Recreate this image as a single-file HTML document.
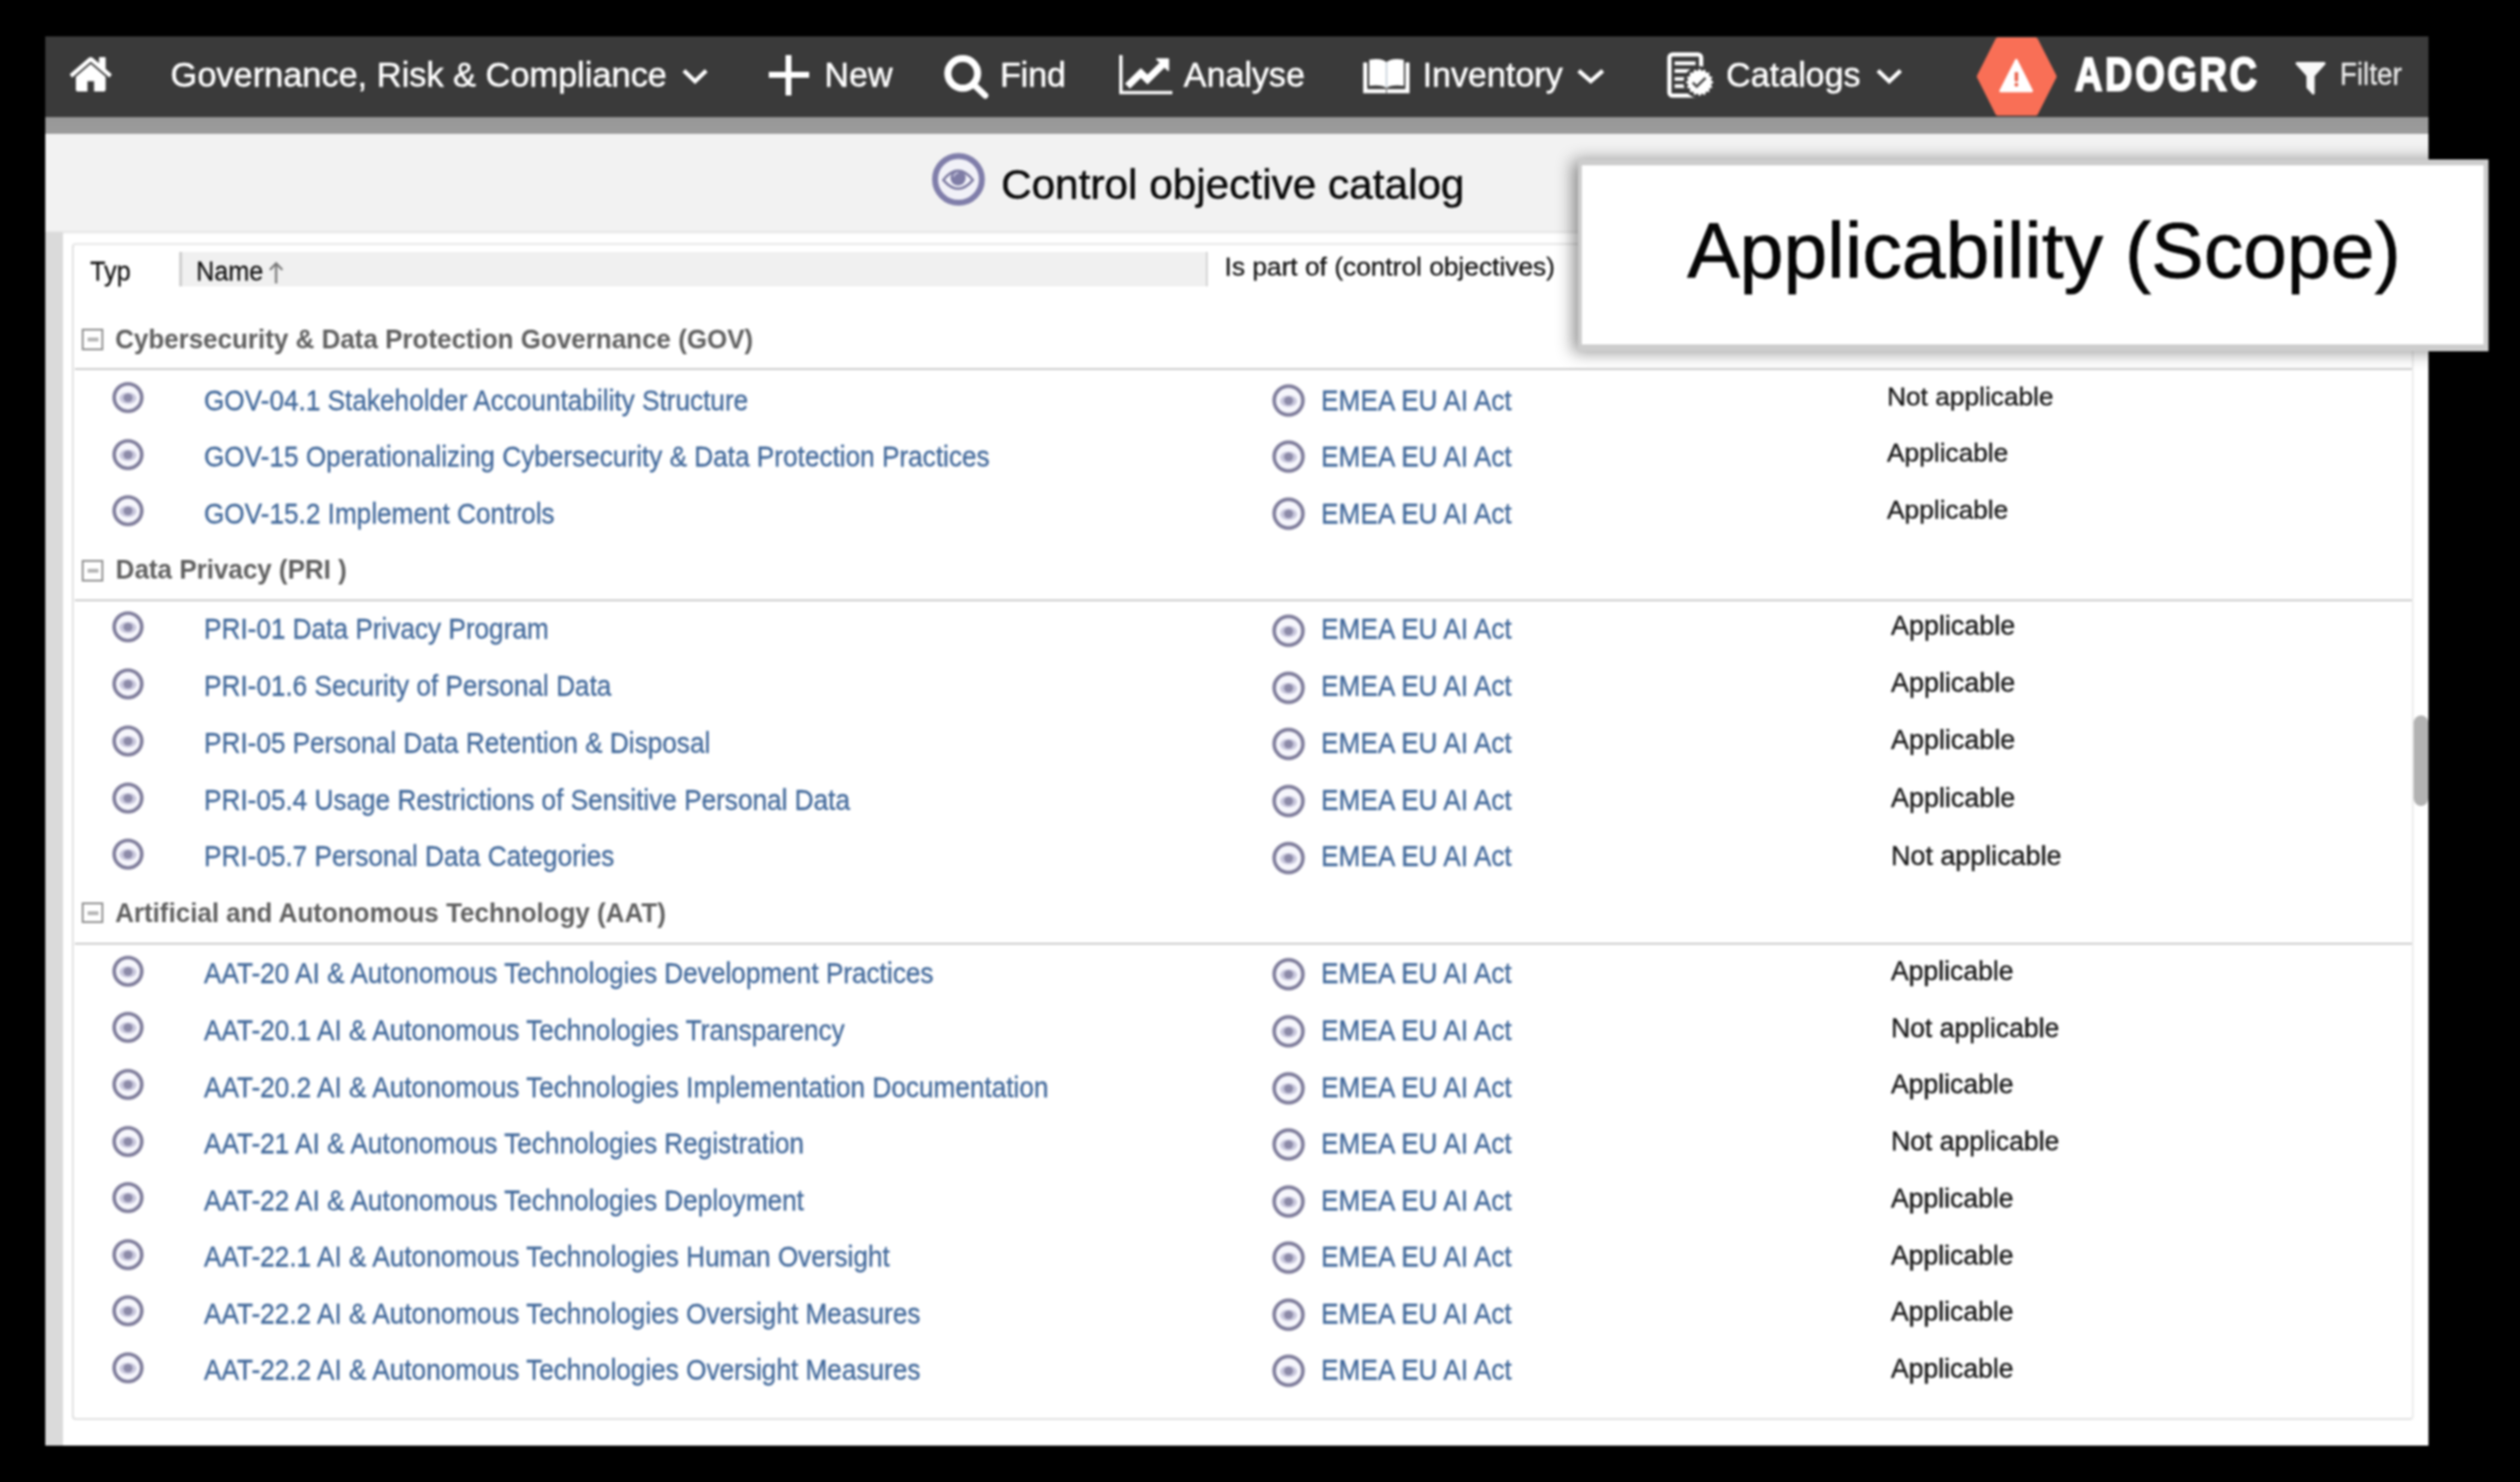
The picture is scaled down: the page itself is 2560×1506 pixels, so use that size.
<!DOCTYPE html>
<html><head><meta charset="utf-8"><title>Control objective catalog</title>
<style>
html,body{margin:0;padding:0;background:#000;}
body{width:2560px;height:1506px;position:relative;overflow:hidden;font-family:"Liberation Sans",sans-serif;}
.a{position:absolute;}
.t{position:absolute;line-height:1;white-space:pre;}
</style></head><body><div id="w" style="position:absolute;left:0;top:0;width:2560px;height:1506px;background:#000;filter:blur(0.85px);">

<div class="a" style="left:46px;top:36.5px;width:2421.1px;height:1432.5px;background:#fff;"></div>
<div class="a" style="left:46px;top:36.5px;width:2421.1px;height:82.2px;background:#3a3a3a;"></div>
<div class="a" style="left:46px;top:118.5px;width:2421.1px;height:17.6px;background:linear-gradient(#979797,#9c9c9c);"></div>
<div class="a" style="left:46px;top:136px;width:2421.1px;height:98.5px;background:#f2f2f2;"></div>
<div class="a" style="left:46px;top:233.5px;width:2421.1px;height:4px;background:linear-gradient(#f0f0f0,#e6e6e6,#fff);"></div>
<div class="a" style="left:46px;top:236.3px;width:17.5px;height:1232.7px;background:#dadada;"></div>
<div class="a" style="left:73.1px;top:247.1px;width:2375.2px;height:1192.4px;border:2.2px solid #e2e2e2;border-right-color:#ececec;border-top-color:#e8e8e8;border-radius:4px;box-sizing:content-box;"></div>
<div class="a" style="left:184.5px;top:255.7px;width:1041px;height:35px;background:#f0f0f0;"></div>
<div class="a" style="left:182.4px;top:255.7px;width:2.2px;height:35px;background:#cfcfcf;"></div>
<div class="a" style="left:1224.6px;top:255.7px;width:2.2px;height:35px;background:#d4d4d4;"></div>
<div class="t " style="left:91.5px;top:264.2px;font-size:25.5px;color:#111;font-weight:400;-webkit-text-stroke:0.3px #111;transform-origin:0 21.59px;transform:scaleY(1.05);">Typ</div>
<div class="t " style="left:199.3px;top:264.2px;font-size:25.5px;color:#111;font-weight:400;-webkit-text-stroke:0.3px #111;transform-origin:0 21.59px;transform:scaleY(1.05);">Name</div>
<svg class="a" style="left:271px;top:264px" width="20" height="26" viewBox="0 0 20 26"><path d="M9.5 24V4M3.2 10.2L9.5 3.6L15.8 10.2" fill="none" stroke="#777" stroke-width="2.2"/></svg>
<div class="t " style="left:1244.0px;top:258.5px;font-size:25.9px;color:#111;font-weight:400;transform-origin:0 0;transform:scaleX(1.032);-webkit-text-stroke:0.3px #111;">Is part of (control objectives)</div>
<div class="a" style="left:83.4px;top:334.0px;width:18px;height:17.6px;border:2.2px solid #939393;background:#fff;"></div>
<div class="a" style="left:89px;top:343.4px;width:11.4px;height:3.3px;background:#b6b6b6;"></div>
<div class="t " style="left:116.9px;top:332.0px;font-size:26.4px;color:#5f5f5f;font-weight:700;transform-origin:0 22.35px;transform:scaleY(1.075);">Cybersecurity &amp; Data Protection Governance (GOV)</div>
<div class="a" style="left:76px;top:374.4px;width:2374px;height:2px;background:#cdcdcd;"></div>
<svg class="a" style="left:112.4px;top:385.9px" width="36" height="36" viewBox="-18 -18 36 36"><circle r="14.0" fill="#f6f6fc" stroke="#7f7d9b" stroke-width="3.7"/><ellipse cx="0" cy="0.6" rx="8.6" ry="5.8" fill="#c9c8dd"/><ellipse cx="0" cy="0.2" rx="4.6" ry="4.2" fill="#8d8ba9"/></svg>
<div class="t " style="left:207.2px;top:394.8px;font-size:26.6px;color:#41689a;font-weight:400;-webkit-text-stroke:0.3px #41689a;transform-origin:0 22.52px;transform:scaleY(1.075);">GOV-04.1 Stakeholder Accountability Structure</div>
<svg class="a" style="left:1290.5px;top:388.5px" width="36" height="36" viewBox="-18 -18 36 36"><circle r="14.6" fill="#f6f6fc" stroke="#7f7d9b" stroke-width="3.7"/><ellipse cx="0" cy="0.6" rx="8.6" ry="5.8" fill="#c9c8dd"/><ellipse cx="0" cy="0.2" rx="4.6" ry="4.2" fill="#8d8ba9"/></svg>
<div class="t " style="left:1342.1px;top:394.8px;font-size:26.6px;color:#41689a;font-weight:400;-webkit-text-stroke:0.3px #41689a;transform-origin:0 22.52px;transform:scaleY(1.075);">EMEA EU AI Act</div>
<div class="t " style="left:1917.0px;top:389.6px;font-size:26.7px;color:#181818;font-weight:400;-webkit-text-stroke:0.4px #181818;">Not applicable</div>
<svg class="a" style="left:112.4px;top:443.6px" width="36" height="36" viewBox="-18 -18 36 36"><circle r="14.0" fill="#f6f6fc" stroke="#7f7d9b" stroke-width="3.7"/><ellipse cx="0" cy="0.6" rx="8.6" ry="5.8" fill="#c9c8dd"/><ellipse cx="0" cy="0.2" rx="4.6" ry="4.2" fill="#8d8ba9"/></svg>
<div class="t " style="left:207.2px;top:452.0px;font-size:26.6px;color:#41689a;font-weight:400;-webkit-text-stroke:0.3px #41689a;transform-origin:0 22.52px;transform:scaleY(1.075);">GOV-15 Operationalizing Cybersecurity &amp; Data Protection Practices</div>
<svg class="a" style="left:1290.5px;top:446.2px" width="36" height="36" viewBox="-18 -18 36 36"><circle r="14.6" fill="#f6f6fc" stroke="#7f7d9b" stroke-width="3.7"/><ellipse cx="0" cy="0.6" rx="8.6" ry="5.8" fill="#c9c8dd"/><ellipse cx="0" cy="0.2" rx="4.6" ry="4.2" fill="#8d8ba9"/></svg>
<div class="t " style="left:1342.1px;top:452.0px;font-size:26.6px;color:#41689a;font-weight:400;-webkit-text-stroke:0.3px #41689a;transform-origin:0 22.52px;transform:scaleY(1.075);">EMEA EU AI Act</div>
<div class="t " style="left:1917.0px;top:447.1px;font-size:26.7px;color:#181818;font-weight:400;-webkit-text-stroke:0.4px #181818;">Applicable</div>
<svg class="a" style="left:112.4px;top:500.9px" width="36" height="36" viewBox="-18 -18 36 36"><circle r="14.0" fill="#f6f6fc" stroke="#7f7d9b" stroke-width="3.7"/><ellipse cx="0" cy="0.6" rx="8.6" ry="5.8" fill="#c9c8dd"/><ellipse cx="0" cy="0.2" rx="4.6" ry="4.2" fill="#8d8ba9"/></svg>
<div class="t " style="left:207.2px;top:509.9px;font-size:26.6px;color:#41689a;font-weight:400;-webkit-text-stroke:0.3px #41689a;transform-origin:0 22.52px;transform:scaleY(1.075);">GOV-15.2 Implement Controls</div>
<svg class="a" style="left:1290.5px;top:503.5px" width="36" height="36" viewBox="-18 -18 36 36"><circle r="14.6" fill="#f6f6fc" stroke="#7f7d9b" stroke-width="3.7"/><ellipse cx="0" cy="0.6" rx="8.6" ry="5.8" fill="#c9c8dd"/><ellipse cx="0" cy="0.2" rx="4.6" ry="4.2" fill="#8d8ba9"/></svg>
<div class="t " style="left:1342.1px;top:509.9px;font-size:26.6px;color:#41689a;font-weight:400;-webkit-text-stroke:0.3px #41689a;transform-origin:0 22.52px;transform:scaleY(1.075);">EMEA EU AI Act</div>
<div class="t " style="left:1917.0px;top:504.9px;font-size:26.7px;color:#181818;font-weight:400;-webkit-text-stroke:0.4px #181818;">Applicable</div>
<div class="a" style="left:83.4px;top:569.0px;width:18px;height:17.6px;border:2.2px solid #939393;background:#fff;"></div>
<div class="a" style="left:89px;top:578.4px;width:11.4px;height:3.3px;background:#b6b6b6;"></div>
<div class="t " style="left:117.6px;top:566.3px;font-size:26.4px;color:#5f5f5f;font-weight:700;transform-origin:0 22.35px;transform:scaleY(1.075);">Data Privacy (PRI )</div>
<div class="a" style="left:76px;top:609.3px;width:2374px;height:2px;background:#cdcdcd;"></div>
<svg class="a" style="left:112.4px;top:619.3px" width="36" height="36" viewBox="-18 -18 36 36"><circle r="14.0" fill="#f6f6fc" stroke="#7f7d9b" stroke-width="3.7"/><ellipse cx="0" cy="0.6" rx="8.6" ry="5.8" fill="#c9c8dd"/><ellipse cx="0" cy="0.2" rx="4.6" ry="4.2" fill="#8d8ba9"/></svg>
<div class="t " style="left:207.2px;top:627.1px;font-size:26.6px;color:#41689a;font-weight:400;-webkit-text-stroke:0.3px #41689a;transform-origin:0 22.52px;transform:scaleY(1.075);">PRI-01 Data Privacy Program</div>
<svg class="a" style="left:1290.5px;top:622.6px" width="36" height="36" viewBox="-18 -18 36 36"><circle r="14.6" fill="#f6f6fc" stroke="#7f7d9b" stroke-width="3.7"/><ellipse cx="0" cy="0.6" rx="8.6" ry="5.8" fill="#c9c8dd"/><ellipse cx="0" cy="0.2" rx="4.6" ry="4.2" fill="#8d8ba9"/></svg>
<div class="t " style="left:1342.1px;top:627.1px;font-size:26.6px;color:#41689a;font-weight:400;-webkit-text-stroke:0.3px #41689a;transform-origin:0 22.52px;transform:scaleY(1.075);">EMEA EU AI Act</div>
<div class="t " style="left:1921.0px;top:621.8px;font-size:27.35px;color:#181818;font-weight:400;-webkit-text-stroke:0.4px #181818;">Applicable</div>
<svg class="a" style="left:112.4px;top:677.3px" width="36" height="36" viewBox="-18 -18 36 36"><circle r="14.0" fill="#f6f6fc" stroke="#7f7d9b" stroke-width="3.7"/><ellipse cx="0" cy="0.6" rx="8.6" ry="5.8" fill="#c9c8dd"/><ellipse cx="0" cy="0.2" rx="4.6" ry="4.2" fill="#8d8ba9"/></svg>
<div class="t " style="left:207.2px;top:685.1px;font-size:26.6px;color:#41689a;font-weight:400;-webkit-text-stroke:0.3px #41689a;transform-origin:0 22.52px;transform:scaleY(1.075);">PRI-01.6 Security of Personal Data</div>
<svg class="a" style="left:1290.5px;top:680.6px" width="36" height="36" viewBox="-18 -18 36 36"><circle r="14.6" fill="#f6f6fc" stroke="#7f7d9b" stroke-width="3.7"/><ellipse cx="0" cy="0.6" rx="8.6" ry="5.8" fill="#c9c8dd"/><ellipse cx="0" cy="0.2" rx="4.6" ry="4.2" fill="#8d8ba9"/></svg>
<div class="t " style="left:1342.1px;top:685.1px;font-size:26.6px;color:#41689a;font-weight:400;-webkit-text-stroke:0.3px #41689a;transform-origin:0 22.52px;transform:scaleY(1.075);">EMEA EU AI Act</div>
<div class="t " style="left:1921.0px;top:680.1px;font-size:27.35px;color:#181818;font-weight:400;-webkit-text-stroke:0.4px #181818;">Applicable</div>
<svg class="a" style="left:112.4px;top:734.8px" width="36" height="36" viewBox="-18 -18 36 36"><circle r="14.0" fill="#f6f6fc" stroke="#7f7d9b" stroke-width="3.7"/><ellipse cx="0" cy="0.6" rx="8.6" ry="5.8" fill="#c9c8dd"/><ellipse cx="0" cy="0.2" rx="4.6" ry="4.2" fill="#8d8ba9"/></svg>
<div class="t " style="left:207.2px;top:742.6px;font-size:26.6px;color:#41689a;font-weight:400;-webkit-text-stroke:0.3px #41689a;transform-origin:0 22.52px;transform:scaleY(1.075);">PRI-05 Personal Data Retention &amp; Disposal</div>
<svg class="a" style="left:1290.5px;top:738.1px" width="36" height="36" viewBox="-18 -18 36 36"><circle r="14.6" fill="#f6f6fc" stroke="#7f7d9b" stroke-width="3.7"/><ellipse cx="0" cy="0.6" rx="8.6" ry="5.8" fill="#c9c8dd"/><ellipse cx="0" cy="0.2" rx="4.6" ry="4.2" fill="#8d8ba9"/></svg>
<div class="t " style="left:1342.1px;top:742.6px;font-size:26.6px;color:#41689a;font-weight:400;-webkit-text-stroke:0.3px #41689a;transform-origin:0 22.52px;transform:scaleY(1.075);">EMEA EU AI Act</div>
<div class="t " style="left:1921.0px;top:738.4px;font-size:27.35px;color:#181818;font-weight:400;-webkit-text-stroke:0.4px #181818;">Applicable</div>
<svg class="a" style="left:112.4px;top:792.7px" width="36" height="36" viewBox="-18 -18 36 36"><circle r="14.0" fill="#f6f6fc" stroke="#7f7d9b" stroke-width="3.7"/><ellipse cx="0" cy="0.6" rx="8.6" ry="5.8" fill="#c9c8dd"/><ellipse cx="0" cy="0.2" rx="4.6" ry="4.2" fill="#8d8ba9"/></svg>
<div class="t " style="left:207.2px;top:800.5px;font-size:26.6px;color:#41689a;font-weight:400;-webkit-text-stroke:0.3px #41689a;transform-origin:0 22.52px;transform:scaleY(1.075);">PRI-05.4 Usage Restrictions of Sensitive Personal Data</div>
<svg class="a" style="left:1290.5px;top:796.0px" width="36" height="36" viewBox="-18 -18 36 36"><circle r="14.6" fill="#f6f6fc" stroke="#7f7d9b" stroke-width="3.7"/><ellipse cx="0" cy="0.6" rx="8.6" ry="5.8" fill="#c9c8dd"/><ellipse cx="0" cy="0.2" rx="4.6" ry="4.2" fill="#8d8ba9"/></svg>
<div class="t " style="left:1342.1px;top:800.5px;font-size:26.6px;color:#41689a;font-weight:400;-webkit-text-stroke:0.3px #41689a;transform-origin:0 22.52px;transform:scaleY(1.075);">EMEA EU AI Act</div>
<div class="t " style="left:1921.0px;top:796.7px;font-size:27.35px;color:#181818;font-weight:400;-webkit-text-stroke:0.4px #181818;">Applicable</div>
<svg class="a" style="left:112.4px;top:850.2px" width="36" height="36" viewBox="-18 -18 36 36"><circle r="14.0" fill="#f6f6fc" stroke="#7f7d9b" stroke-width="3.7"/><ellipse cx="0" cy="0.6" rx="8.6" ry="5.8" fill="#c9c8dd"/><ellipse cx="0" cy="0.2" rx="4.6" ry="4.2" fill="#8d8ba9"/></svg>
<div class="t " style="left:207.2px;top:858.0px;font-size:26.6px;color:#41689a;font-weight:400;-webkit-text-stroke:0.3px #41689a;transform-origin:0 22.52px;transform:scaleY(1.075);">PRI-05.7 Personal Data Categories</div>
<svg class="a" style="left:1290.5px;top:853.5px" width="36" height="36" viewBox="-18 -18 36 36"><circle r="14.6" fill="#f6f6fc" stroke="#7f7d9b" stroke-width="3.7"/><ellipse cx="0" cy="0.6" rx="8.6" ry="5.8" fill="#c9c8dd"/><ellipse cx="0" cy="0.2" rx="4.6" ry="4.2" fill="#8d8ba9"/></svg>
<div class="t " style="left:1342.1px;top:858.0px;font-size:26.6px;color:#41689a;font-weight:400;-webkit-text-stroke:0.3px #41689a;transform-origin:0 22.52px;transform:scaleY(1.075);">EMEA EU AI Act</div>
<div class="t " style="left:1921.0px;top:855.5px;font-size:27.35px;color:#181818;font-weight:400;-webkit-text-stroke:0.4px #181818;">Not applicable</div>
<div class="a" style="left:83.4px;top:916.9px;width:18px;height:17.6px;border:2.2px solid #939393;background:#fff;"></div>
<div class="a" style="left:89px;top:926.3px;width:11.4px;height:3.3px;background:#b6b6b6;"></div>
<div class="t " style="left:116.9px;top:914.6px;font-size:26.4px;color:#5f5f5f;font-weight:700;transform-origin:0 22.35px;transform:scaleY(1.075);">Artificial and Autonomous Technology (AAT)</div>
<div class="a" style="left:76px;top:957.5px;width:2374px;height:2px;background:#cdcdcd;"></div>
<svg class="a" style="left:112.4px;top:968.5px" width="36" height="36" viewBox="-18 -18 36 36"><circle r="14.0" fill="#f6f6fc" stroke="#7f7d9b" stroke-width="3.7"/><ellipse cx="0" cy="0.6" rx="8.6" ry="5.8" fill="#c9c8dd"/><ellipse cx="0" cy="0.2" rx="4.6" ry="4.2" fill="#8d8ba9"/></svg>
<div class="t " style="left:207.2px;top:977.1px;font-size:26.6px;color:#41689a;font-weight:400;-webkit-text-stroke:0.3px #41689a;transform-origin:0 22.52px;transform:scaleY(1.075);">AAT-20 AI &amp; Autonomous Technologies Development Practices</div>
<svg class="a" style="left:1290.5px;top:971.8px" width="36" height="36" viewBox="-18 -18 36 36"><circle r="14.6" fill="#f6f6fc" stroke="#7f7d9b" stroke-width="3.7"/><ellipse cx="0" cy="0.6" rx="8.6" ry="5.8" fill="#c9c8dd"/><ellipse cx="0" cy="0.2" rx="4.6" ry="4.2" fill="#8d8ba9"/></svg>
<div class="t " style="left:1342.1px;top:977.1px;font-size:26.6px;color:#41689a;font-weight:400;-webkit-text-stroke:0.3px #41689a;transform-origin:0 22.52px;transform:scaleY(1.075);">EMEA EU AI Act</div>
<div class="t " style="left:1921.0px;top:974.0px;font-size:27.0px;color:#181818;font-weight:400;-webkit-text-stroke:0.4px #181818;">Applicable</div>
<svg class="a" style="left:112.4px;top:1026.3px" width="36" height="36" viewBox="-18 -18 36 36"><circle r="14.0" fill="#f6f6fc" stroke="#7f7d9b" stroke-width="3.7"/><ellipse cx="0" cy="0.6" rx="8.6" ry="5.8" fill="#c9c8dd"/><ellipse cx="0" cy="0.2" rx="4.6" ry="4.2" fill="#8d8ba9"/></svg>
<div class="t " style="left:207.2px;top:1034.9px;font-size:26.6px;color:#41689a;font-weight:400;-webkit-text-stroke:0.3px #41689a;transform-origin:0 22.52px;transform:scaleY(1.075);">AAT-20.1 AI &amp; Autonomous Technologies Transparency</div>
<svg class="a" style="left:1290.5px;top:1029.6px" width="36" height="36" viewBox="-18 -18 36 36"><circle r="14.6" fill="#f6f6fc" stroke="#7f7d9b" stroke-width="3.7"/><ellipse cx="0" cy="0.6" rx="8.6" ry="5.8" fill="#c9c8dd"/><ellipse cx="0" cy="0.2" rx="4.6" ry="4.2" fill="#8d8ba9"/></svg>
<div class="t " style="left:1342.1px;top:1034.9px;font-size:26.6px;color:#41689a;font-weight:400;-webkit-text-stroke:0.3px #41689a;transform-origin:0 22.52px;transform:scaleY(1.075);">EMEA EU AI Act</div>
<div class="t " style="left:1921.0px;top:1031.6px;font-size:27.0px;color:#181818;font-weight:400;-webkit-text-stroke:0.4px #181818;">Not applicable</div>
<svg class="a" style="left:112.4px;top:1084.2px" width="36" height="36" viewBox="-18 -18 36 36"><circle r="14.0" fill="#f6f6fc" stroke="#7f7d9b" stroke-width="3.7"/><ellipse cx="0" cy="0.6" rx="8.6" ry="5.8" fill="#c9c8dd"/><ellipse cx="0" cy="0.2" rx="4.6" ry="4.2" fill="#8d8ba9"/></svg>
<div class="t " style="left:207.2px;top:1092.8px;font-size:26.6px;color:#41689a;font-weight:400;-webkit-text-stroke:0.3px #41689a;transform-origin:0 22.52px;transform:scaleY(1.075);">AAT-20.2 AI &amp; Autonomous Technologies Implementation Documentation</div>
<svg class="a" style="left:1290.5px;top:1087.5px" width="36" height="36" viewBox="-18 -18 36 36"><circle r="14.6" fill="#f6f6fc" stroke="#7f7d9b" stroke-width="3.7"/><ellipse cx="0" cy="0.6" rx="8.6" ry="5.8" fill="#c9c8dd"/><ellipse cx="0" cy="0.2" rx="4.6" ry="4.2" fill="#8d8ba9"/></svg>
<div class="t " style="left:1342.1px;top:1092.8px;font-size:26.6px;color:#41689a;font-weight:400;-webkit-text-stroke:0.3px #41689a;transform-origin:0 22.52px;transform:scaleY(1.075);">EMEA EU AI Act</div>
<div class="t " style="left:1921.0px;top:1089.3px;font-size:27.0px;color:#181818;font-weight:400;-webkit-text-stroke:0.4px #181818;">Applicable</div>
<svg class="a" style="left:112.4px;top:1141.7px" width="36" height="36" viewBox="-18 -18 36 36"><circle r="14.0" fill="#f6f6fc" stroke="#7f7d9b" stroke-width="3.7"/><ellipse cx="0" cy="0.6" rx="8.6" ry="5.8" fill="#c9c8dd"/><ellipse cx="0" cy="0.2" rx="4.6" ry="4.2" fill="#8d8ba9"/></svg>
<div class="t " style="left:207.2px;top:1150.3px;font-size:26.6px;color:#41689a;font-weight:400;-webkit-text-stroke:0.3px #41689a;transform-origin:0 22.52px;transform:scaleY(1.075);">AAT-21 AI &amp; Autonomous Technologies Registration</div>
<svg class="a" style="left:1290.5px;top:1145.0px" width="36" height="36" viewBox="-18 -18 36 36"><circle r="14.6" fill="#f6f6fc" stroke="#7f7d9b" stroke-width="3.7"/><ellipse cx="0" cy="0.6" rx="8.6" ry="5.8" fill="#c9c8dd"/><ellipse cx="0" cy="0.2" rx="4.6" ry="4.2" fill="#8d8ba9"/></svg>
<div class="t " style="left:1342.1px;top:1150.3px;font-size:26.6px;color:#41689a;font-weight:400;-webkit-text-stroke:0.3px #41689a;transform-origin:0 22.52px;transform:scaleY(1.075);">EMEA EU AI Act</div>
<div class="t " style="left:1921.0px;top:1147.3px;font-size:27.0px;color:#181818;font-weight:400;-webkit-text-stroke:0.4px #181818;">Not applicable</div>
<svg class="a" style="left:112.4px;top:1199.2px" width="36" height="36" viewBox="-18 -18 36 36"><circle r="14.0" fill="#f6f6fc" stroke="#7f7d9b" stroke-width="3.7"/><ellipse cx="0" cy="0.6" rx="8.6" ry="5.8" fill="#c9c8dd"/><ellipse cx="0" cy="0.2" rx="4.6" ry="4.2" fill="#8d8ba9"/></svg>
<div class="t " style="left:207.2px;top:1207.8px;font-size:26.6px;color:#41689a;font-weight:400;-webkit-text-stroke:0.3px #41689a;transform-origin:0 22.52px;transform:scaleY(1.075);">AAT-22 AI &amp; Autonomous Technologies Deployment</div>
<svg class="a" style="left:1290.5px;top:1202.5px" width="36" height="36" viewBox="-18 -18 36 36"><circle r="14.6" fill="#f6f6fc" stroke="#7f7d9b" stroke-width="3.7"/><ellipse cx="0" cy="0.6" rx="8.6" ry="5.8" fill="#c9c8dd"/><ellipse cx="0" cy="0.2" rx="4.6" ry="4.2" fill="#8d8ba9"/></svg>
<div class="t " style="left:1342.1px;top:1207.8px;font-size:26.6px;color:#41689a;font-weight:400;-webkit-text-stroke:0.3px #41689a;transform-origin:0 22.52px;transform:scaleY(1.075);">EMEA EU AI Act</div>
<div class="t " style="left:1921.0px;top:1204.9px;font-size:27.0px;color:#181818;font-weight:400;-webkit-text-stroke:0.4px #181818;">Applicable</div>
<svg class="a" style="left:112.4px;top:1256.8px" width="36" height="36" viewBox="-18 -18 36 36"><circle r="14.0" fill="#f6f6fc" stroke="#7f7d9b" stroke-width="3.7"/><ellipse cx="0" cy="0.6" rx="8.6" ry="5.8" fill="#c9c8dd"/><ellipse cx="0" cy="0.2" rx="4.6" ry="4.2" fill="#8d8ba9"/></svg>
<div class="t " style="left:207.2px;top:1265.4px;font-size:26.6px;color:#41689a;font-weight:400;-webkit-text-stroke:0.3px #41689a;transform-origin:0 22.52px;transform:scaleY(1.075);">AAT-22.1 AI &amp; Autonomous Technologies Human Oversight</div>
<svg class="a" style="left:1290.5px;top:1260.1px" width="36" height="36" viewBox="-18 -18 36 36"><circle r="14.6" fill="#f6f6fc" stroke="#7f7d9b" stroke-width="3.7"/><ellipse cx="0" cy="0.6" rx="8.6" ry="5.8" fill="#c9c8dd"/><ellipse cx="0" cy="0.2" rx="4.6" ry="4.2" fill="#8d8ba9"/></svg>
<div class="t " style="left:1342.1px;top:1265.4px;font-size:26.6px;color:#41689a;font-weight:400;-webkit-text-stroke:0.3px #41689a;transform-origin:0 22.52px;transform:scaleY(1.075);">EMEA EU AI Act</div>
<div class="t " style="left:1921.0px;top:1262.6px;font-size:27.0px;color:#181818;font-weight:400;-webkit-text-stroke:0.4px #181818;">Applicable</div>
<svg class="a" style="left:112.4px;top:1314.4px" width="36" height="36" viewBox="-18 -18 36 36"><circle r="14.0" fill="#f6f6fc" stroke="#7f7d9b" stroke-width="3.7"/><ellipse cx="0" cy="0.6" rx="8.6" ry="5.8" fill="#c9c8dd"/><ellipse cx="0" cy="0.2" rx="4.6" ry="4.2" fill="#8d8ba9"/></svg>
<div class="t " style="left:207.2px;top:1323.0px;font-size:26.6px;color:#41689a;font-weight:400;-webkit-text-stroke:0.3px #41689a;transform-origin:0 22.52px;transform:scaleY(1.075);">AAT-22.2 AI &amp; Autonomous Technologies Oversight Measures</div>
<svg class="a" style="left:1290.5px;top:1317.7px" width="36" height="36" viewBox="-18 -18 36 36"><circle r="14.6" fill="#f6f6fc" stroke="#7f7d9b" stroke-width="3.7"/><ellipse cx="0" cy="0.6" rx="8.6" ry="5.8" fill="#c9c8dd"/><ellipse cx="0" cy="0.2" rx="4.6" ry="4.2" fill="#8d8ba9"/></svg>
<div class="t " style="left:1342.1px;top:1323.0px;font-size:26.6px;color:#41689a;font-weight:400;-webkit-text-stroke:0.3px #41689a;transform-origin:0 22.52px;transform:scaleY(1.075);">EMEA EU AI Act</div>
<div class="t " style="left:1921.0px;top:1320.2px;font-size:27.0px;color:#181818;font-weight:400;-webkit-text-stroke:0.4px #181818;">Applicable</div>
<svg class="a" style="left:112.4px;top:1371.8px" width="36" height="36" viewBox="-18 -18 36 36"><circle r="14.0" fill="#f6f6fc" stroke="#7f7d9b" stroke-width="3.7"/><ellipse cx="0" cy="0.6" rx="8.6" ry="5.8" fill="#c9c8dd"/><ellipse cx="0" cy="0.2" rx="4.6" ry="4.2" fill="#8d8ba9"/></svg>
<div class="t " style="left:207.2px;top:1380.4px;font-size:26.6px;color:#41689a;font-weight:400;-webkit-text-stroke:0.3px #41689a;transform-origin:0 22.52px;transform:scaleY(1.075);">AAT-22.2 AI &amp; Autonomous Technologies Oversight Measures</div>
<svg class="a" style="left:1290.5px;top:1375.1px" width="36" height="36" viewBox="-18 -18 36 36"><circle r="14.6" fill="#f6f6fc" stroke="#7f7d9b" stroke-width="3.7"/><ellipse cx="0" cy="0.6" rx="8.6" ry="5.8" fill="#c9c8dd"/><ellipse cx="0" cy="0.2" rx="4.6" ry="4.2" fill="#8d8ba9"/></svg>
<div class="t " style="left:1342.1px;top:1380.4px;font-size:26.6px;color:#41689a;font-weight:400;-webkit-text-stroke:0.3px #41689a;transform-origin:0 22.52px;transform:scaleY(1.075);">EMEA EU AI Act</div>
<div class="t " style="left:1921.0px;top:1378.2px;font-size:27.0px;color:#181818;font-weight:400;-webkit-text-stroke:0.4px #181818;">Applicable</div>
<div class="a" style="left:2452px;top:726.5px;width:15px;height:92px;border-radius:7.5px;background:#b2b2b2;"></div>
<svg class="a" style="left:71.3px;top:58.3px" width="42.4" height="34.9" viewBox="89.9 253 1612.2 1283" preserveAspectRatio="none"><path d="M1472 992v480q0 26-19 45t-45 19h-384v-384h-256v384h-384q-26 0-45-19t-19-45v-480q0-1 .5-3t.5-3l575-474 575 474q1 2 1 6zm223-69l-62 74q-8 9-21 11h-3q-13 0-21-7l-692-577-692 577q-12 8-24 7-13-2-21-11l-62-74q-8-10-7-23.500t11-21.500l719-599q32-26 76-26t76 26l244 204v-195q0-14 9-23t23-9h192q14 0 23 9t9 23v408l219 182q10 8 11 21.500t-7 23.500z" fill="#fff"/></svg>
<div class="t" style="left:173.3px;top:59.1px;font-size:34.9px;color:#fff;font-weight:400;-webkit-text-stroke:0.5px #fff;">Governance, Risk &amp; Compliance</div>
<svg class="a" style="left:690.7px;top:67.8px" width="30.2" height="19.7" viewBox="-2 -2 30.2 19.7"><path d="M1.8 1.8L13.1 12.7L24.4 1.8" fill="none" stroke="#fff" stroke-width="4.2"/></svg>
<div class="a" style="left:780.5px;top:73.2px;width:41.5px;height:6px;background:#fff;"></div>
<div class="a" style="left:798.2px;top:55.5px;width:6px;height:41.5px;background:#fff;"></div>
<div class="t" style="left:837.5px;top:59.3px;font-size:34.6px;color:#fff;font-weight:400;-webkit-text-stroke:0.5px #fff;">New</div>
<svg class="a" style="left:955px;top:52px" width="54" height="52" viewBox="955 52 54 52"><circle cx="978" cy="74.6" r="15.1" fill="none" stroke="#fff" stroke-width="7.2"/><path d="M988.5 85.2L1000.8 97" stroke="#fff" stroke-width="6.4" stroke-linecap="round"/></svg>
<div class="t" style="left:1015.9px;top:59.3px;font-size:34.6px;color:#fff;font-weight:400;-webkit-text-stroke:0.5px #fff;letter-spacing:-0.15px;">Find</div>
<svg class="a" style="left:1136.6px;top:56.3px" width="54.0" height="39.7" viewBox="0 128 2048 1536" preserveAspectRatio="none"><path d="M2048 1536v128h-2048v-1536h128v1408h1920zm-128-1248v435q0 21-19.500 29.500t-35.500-7.500l-121-121-633 633q-10 10-23 10t-23-10l-233-233-416 416-192-192 585-585q10-10 23-10t23 10l233 233 464-464-121-121q-16-16-7.500-35.500t29.500-19.500h435q14 0 23 9t9 23z" fill="#fff"/></svg>
<div class="t" style="left:1202.6px;top:59.3px;font-size:34.6px;color:#fff;font-weight:400;-webkit-text-stroke:0.5px #fff;">Analyse</div>
<svg class="a" style="left:1382px;top:57px" width="54" height="41" viewBox="1382 57 54 41"><path d="M1386.9 63.4V92.6H1429.8V63.4" fill="none" stroke="#fff" stroke-width="4.2" stroke-linejoin="miter"/><path d="M1391 60.7Q1400 59.3 1405.4 61.2L1408.5 63.0L1411.6 61.2Q1417 59.3 1426.1 60.7V87.2Q1417 86.2 1411.6 87.8L1408.5 89.4L1405.4 87.8Q1400 86.2 1391 87.2Z" fill="#fff"/><path d="M1408.5 63.2V89.2" stroke="#c2cdd6" stroke-width="1.5"/><path d="M1408.5 90.6V94.8" stroke="#555" stroke-width="0.9"/></svg>
<div class="t" style="left:1445.2px;top:59.3px;font-size:34.6px;color:#fff;font-weight:400;-webkit-text-stroke:0.5px #fff;">Inventory</div>
<svg class="a" style="left:1599.8px;top:68.0px" width="32.0" height="19.5" viewBox="-2 -2 32.0 19.5"><path d="M1.8 1.8L14.0 12.5L26.2 1.8" fill="none" stroke="#fff" stroke-width="4.2"/></svg>
<svg class="a" style="left:1690px;top:50px" width="56" height="54" viewBox="1690 50 56 54"><defs><mask id="cm"><rect x="1690" y="50" width="56" height="54" fill="#fff"/><circle cx="1726.6" cy="83.6" r="16.4" fill="#000"/></mask></defs><g mask="url(#cm)"><rect x="1695.9" y="55.3" width="32.2" height="41.9" rx="3.2" fill="none" stroke="#fff" stroke-width="4.3"/><rect x="1701.2" y="62.4" width="21.3" height="3.8" fill="#fff"/><rect x="1701.2" y="70.2" width="21.3" height="3.8" fill="#fff"/><rect x="1701.2" y="78.4" width="12" height="3.6" fill="#fff"/><rect x="1701.2" y="85.6" width="12" height="3.8" fill="#fff"/></g><polygon points="1726.6,69.4 1728.9,72.2 1732.0,70.5 1733.0,74.0 1736.6,73.6 1736.2,77.2 1739.7,78.2 1738.0,81.3 1740.8,83.6 1738.0,85.9 1739.7,89.0 1736.2,90.0 1736.6,93.6 1733.0,93.2 1732.0,96.7 1728.9,95.0 1726.6,97.8 1724.3,95.0 1721.2,96.7 1720.2,93.2 1716.6,93.6 1717.0,90.0 1713.5,89.0 1715.2,85.9 1712.4,83.6 1715.2,81.3 1713.5,78.2 1717.0,77.2 1716.6,73.6 1720.2,74.0 1721.2,70.5 1724.3,72.2" fill="#fff"/><path d="M1719.6 83.9L1723.7 88.0L1732.6 79.2" fill="none" stroke="#4a4a4a" stroke-width="2.6"/></svg>
<div class="t" style="left:1753.6px;top:59.3px;font-size:34.6px;color:#fff;font-weight:400;-webkit-text-stroke:0.5px #fff;">Catalogs</div>
<svg class="a" style="left:1903.9px;top:67.8px" width="30.5" height="19.7" viewBox="-2 -2 30.5 19.7"><path d="M1.8 1.8L13.2 12.7L24.7 1.8" fill="none" stroke="#fff" stroke-width="4.2"/></svg>
<svg class="a" style="left:2004px;top:34px" width="90" height="88" viewBox="2004 34 90 88"><path d="M2008.2 77.8L2028.2 38.2H2069.2L2089.3 77.8L2069.2 117.5H2028.2Z" fill="#f96f56" stroke="#f96f56" stroke-width="6" stroke-linejoin="round" transform="translate(2048.75 77.8) scale(0.93 0.932) translate(-2048.75 -77.8)"/><path d="M2048.3 61.2L2064 92.4H2032.4Z" fill="#fff" stroke="#fff" stroke-width="2.6" stroke-linejoin="round"/><rect x="2046.6" y="73.2" width="3.6" height="9.6" rx="1" fill="#e9634c"/><rect x="2046.6" y="84.2" width="3.6" height="3.8" rx="1.4" fill="#e9634c"/></svg>
<div class="t" style="left:2108.4px;top:51.3px;font-size:48.6px;font-weight:700;color:#fff;transform-origin:0 0;transform:scaleX(0.79);letter-spacing:3.6px;-webkit-text-stroke:2.1px #fff;">ADOGRC</div>
<svg class="a" style="left:2332.4px;top:62.6px" width="30.5" height="33.2" viewBox="191 256 1410 1408" preserveAspectRatio="none"><path d="M1595 295q17 41-14 70l-493 493v742q0 42-39 59-13 5-25 5-27 0-45-19l-256-256q-19-19-19-45v-486l-493-493q-31-29-14-70 17-39 59-39h1280q42 0 59 39z" fill="#f8f8f8"/></svg>
<div class="t" style="left:2377.4px;top:59.4px;font-size:32px;color:#ececec;-webkit-text-stroke:0.4px #ececec;transform-origin:0 0;transform:scaleX(0.886);">Filter</div>
<svg class="a" style="left:943px;top:152px" width="62" height="62" viewBox="943 152 62 62"><circle cx="973.7" cy="182.3" r="23.8" fill="#f1f1f8" stroke="#807eaa" stroke-width="6"/><path d="M958.2 182.9Q973.3 164.0 988.4 182.9Q973.3 200.6 958.2 182.9Z" fill="#f3f3fa" stroke="#7c7aa0" stroke-width="2.4" stroke-linejoin="round"/><circle cx="973.3" cy="180.8" r="7.7" fill="#7f7da6"/><path d="M969.0 179.2A4.6 4.6 0 0 1 973.0 175.6" fill="none" stroke="#d5d4ea" stroke-width="1.3" stroke-linecap="round"/></svg>
<div class="t" style="left:1016.9px;top:165.6px;font-size:43.0px;color:#0a0a0a;font-weight:400;-webkit-text-stroke:0.5px #0a0a0a;">Control objective catalog</div>
<div class="a" style="left:1602.6px;top:161.6px;width:916px;height:182.8px;border-style:solid;border-color:#cdcdcd;border-width:6.1px 5.2px 7px 4.5px;background:#fff;box-shadow:-5.5px 0.5px 16px 0 rgba(0,0,0,.44);"></div>
<div class="t " style="left:1714.0px;top:215.1px;font-size:80.0px;color:#050505;font-weight:400;-webkit-text-stroke:0.7px #050505;">Applicability (Scope)</div>
</div></body></html>
